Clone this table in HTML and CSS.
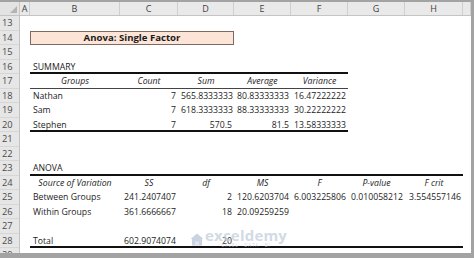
FILE: index.html
```html
<!DOCTYPE html>
<html>
<head>
<meta charset="utf-8">
<link rel="stylesheet" href="styles.css">
</head>
<body>
<div class="sheet">
  <div class="row head">
    <div class="corner"><span class="tri"></span></div>
    <div class="ch">A</div><div class="ch">B</div><div class="ch">C</div><div class="ch">D</div>
    <div class="ch">E</div><div class="ch">F</div><div class="ch">G</div><div class="ch">H</div><div class="ch"></div>
  </div>
  <div class="row"><div class="rh">13</div></div>
  <div class="row"><div class="rh">14</div><div></div><div class="title">Anova: Single Factor</div></div>
  <div class="row"><div class="rh">15</div></div>
  <div class="row"><div class="rh">16</div><div></div>
    <div class="c bb2">SUMMARY</div><div class="c bb2"></div><div class="c bb2"></div><div class="c bb2"></div><div class="c bb2"></div></div>
  <div class="row"><div class="rh">17</div><div></div>
    <div class="c hd bb1">Groups</div><div class="c hd bb1">Count</div><div class="c hd bb1">Sum</div><div class="c hd bb1">Average</div><div class="c hd bb1">Variance</div></div>
  <div class="row"><div class="rh">18</div><div></div>
    <div class="c">Nathan</div><div class="c n">7</div><div class="c n">565.8333333</div><div class="c n">80.83333333</div><div class="c n">16.47222222</div></div>
  <div class="row"><div class="rh">19</div><div></div>
    <div class="c">Sam</div><div class="c n">7</div><div class="c n">618.3333333</div><div class="c n">88.33333333</div><div class="c n">30.22222222</div></div>
  <div class="row"><div class="rh">20</div><div></div>
    <div class="c bb2">Stephen</div><div class="c n bb2">7</div><div class="c n bb2">570.5</div><div class="c n bb2">81.5</div><div class="c n bb2">13.58333333</div></div>
  <div class="row"><div class="rh">21</div></div>
  <div class="row"><div class="rh">22</div></div>
  <div class="row"><div class="rh">23</div><div></div>
    <div class="c bb2">ANOVA</div><div class="c bb2"></div><div class="c bb2"></div><div class="c bb2"></div><div class="c bb2"></div><div class="c bb2"></div><div class="c bb2"></div></div>
  <div class="row"><div class="rh">24</div><div></div>
    <div class="c hd">Source of Variation</div><div class="c hd">SS</div><div class="c hd">df</div><div class="c hd">MS</div><div class="c hd">F</div><div class="c hd">P-value</div><div class="c hd">F crit</div></div>
  <div class="row"><div class="rh">25</div><div></div>
    <div class="c">Between Groups</div><div class="c n">241.2407407</div><div class="c n">2</div><div class="c n">120.6203704</div><div class="c n">6.003225806</div><div class="c n">0.010058212</div><div class="c n">3.554557146</div></div>
  <div class="row"><div class="rh">26</div><div></div>
    <div class="c">Within Groups</div><div class="c n">361.6666667</div><div class="c n">18</div><div class="c n">20.09259259</div></div>
  <div class="row"><div class="rh">27</div></div>
  <div class="row"><div class="rh">28</div><div></div>
    <div class="c bb2">Total</div><div class="c n bb2">602.9074074</div><div class="c n bb2">20</div><div class="c bb2"></div><div class="c bb2"></div><div class="c bb2"></div><div class="c bb2"></div></div>
  <div class="row"><div class="rh">29</div></div>

  <div class="wm">
    <svg class="wm-icon" width="14" height="13" viewBox="0 0 14 13">
      <path d="M7 0.5 L13.5 6 L12 6 L12 12.5 L2 12.5 L2 6 L0.5 6 Z" fill="#b9c6d8"/>
      <path d="M5 12.5 L5 8.5 L9 8.5 L9 12.5 Z" fill="#d6dee9"/>
    </svg>
    <div class="wm-text">
      <span class="wm-name">exceldemy</span>
      <span class="wm-sub">EXCEL · DATA · BI</span>
    </div>
  </div>
</div>
</body>
</html>
```

FILE: styles.css
```css
html, body {
  margin: 0;
  padding: 0;
}
body {
  background: #a3a3a3;
  width: 474px;
  height: 258px;
  overflow: hidden;
  padding-top: 2px;
  box-sizing: border-box;
  font-family: "Open Sans", "Liberation Sans", sans-serif;
}
.sheet {
  position: relative;
  width: 471px;
  height: 251px;
  background: #ffffff;
  overflow: hidden;
  display: flex;
  flex-direction: column;
}
.row {
  display: grid;
  grid-template-columns: 20px 10px 90px 58px 56px 57px 57px 57px 58px 8px;
  height: 14.5px;
  flex: none;
  font-size: 8.7px;
  color: #1c1c1c;
}
.row.head {
  height: 14px;
  background: #e9e9e9;
  border-bottom: 1px solid #c4c4c4;
  box-sizing: border-box;
}
.corner {
  position: relative;
  background: #e3e3e3;
  border-right: 1px solid #c8c8c8;
}
.tri {
  position: absolute;
  right: 2px;
  bottom: 2px;
  width: 0;
  height: 0;
  border-left: 7px solid transparent;
  border-bottom: 7px solid #b4b4b4;
}
.ch {
  text-align: center;
  line-height: 13px;
  color: #404040;
  font-size: 9px;
  border-right: 1px solid #cfcfcf;
}
.rh {
  background: #e6e6e6;
  border-right: 1px solid #c4c4c4;
  box-shadow: inset 0 -1px 0 #d6d6d6;
  color: #4a4a4a;
  line-height: 14.5px;
  padding-left: 2px;
  font-size: 9.3px;
}
.c {
  line-height: 14.5px;
  padding: 0 2px 0 3px;
  white-space: nowrap;
}
.c.n {
  text-align: right;
}
.c.hd {
  font-style: italic;
  text-align: center;
  padding: 0;
}
.bb2 {
  box-shadow: inset 0 -2px 0 #111;
}
.bb1 {
  box-shadow: inset 0 -1px 0 #444;
}
.title {
  grid-column: 3 / 6;
  background: #fce4d6;
  border: 1px solid #7d6a62;
  text-align: center;
  font-weight: 700;
  line-height: 12.5px;
  font-size: 9.6px;
  color: #1a1a1a;
}
.wm {
  position: absolute;
  left: 190px;
  top: 226px;
  display: flex;
  align-items: flex-start;
  gap: 1px;
  opacity: 0.75;
}
.wm-icon {
  margin-top: 5px;
}
.wm-text {
  display: flex;
  flex-direction: column;
  align-items: center;
}
.wm-name {
  font-family: "Open Sans", sans-serif;
  font-weight: 700;
  font-size: 15px;
  line-height: 15px;
  color: #c3cedc;
  letter-spacing: 0.2px;
}
.wm-sub {
  font-size: 4.5px;
  line-height: 5px;
  color: #c9d1dc;
  letter-spacing: 0.8px;
}
```
